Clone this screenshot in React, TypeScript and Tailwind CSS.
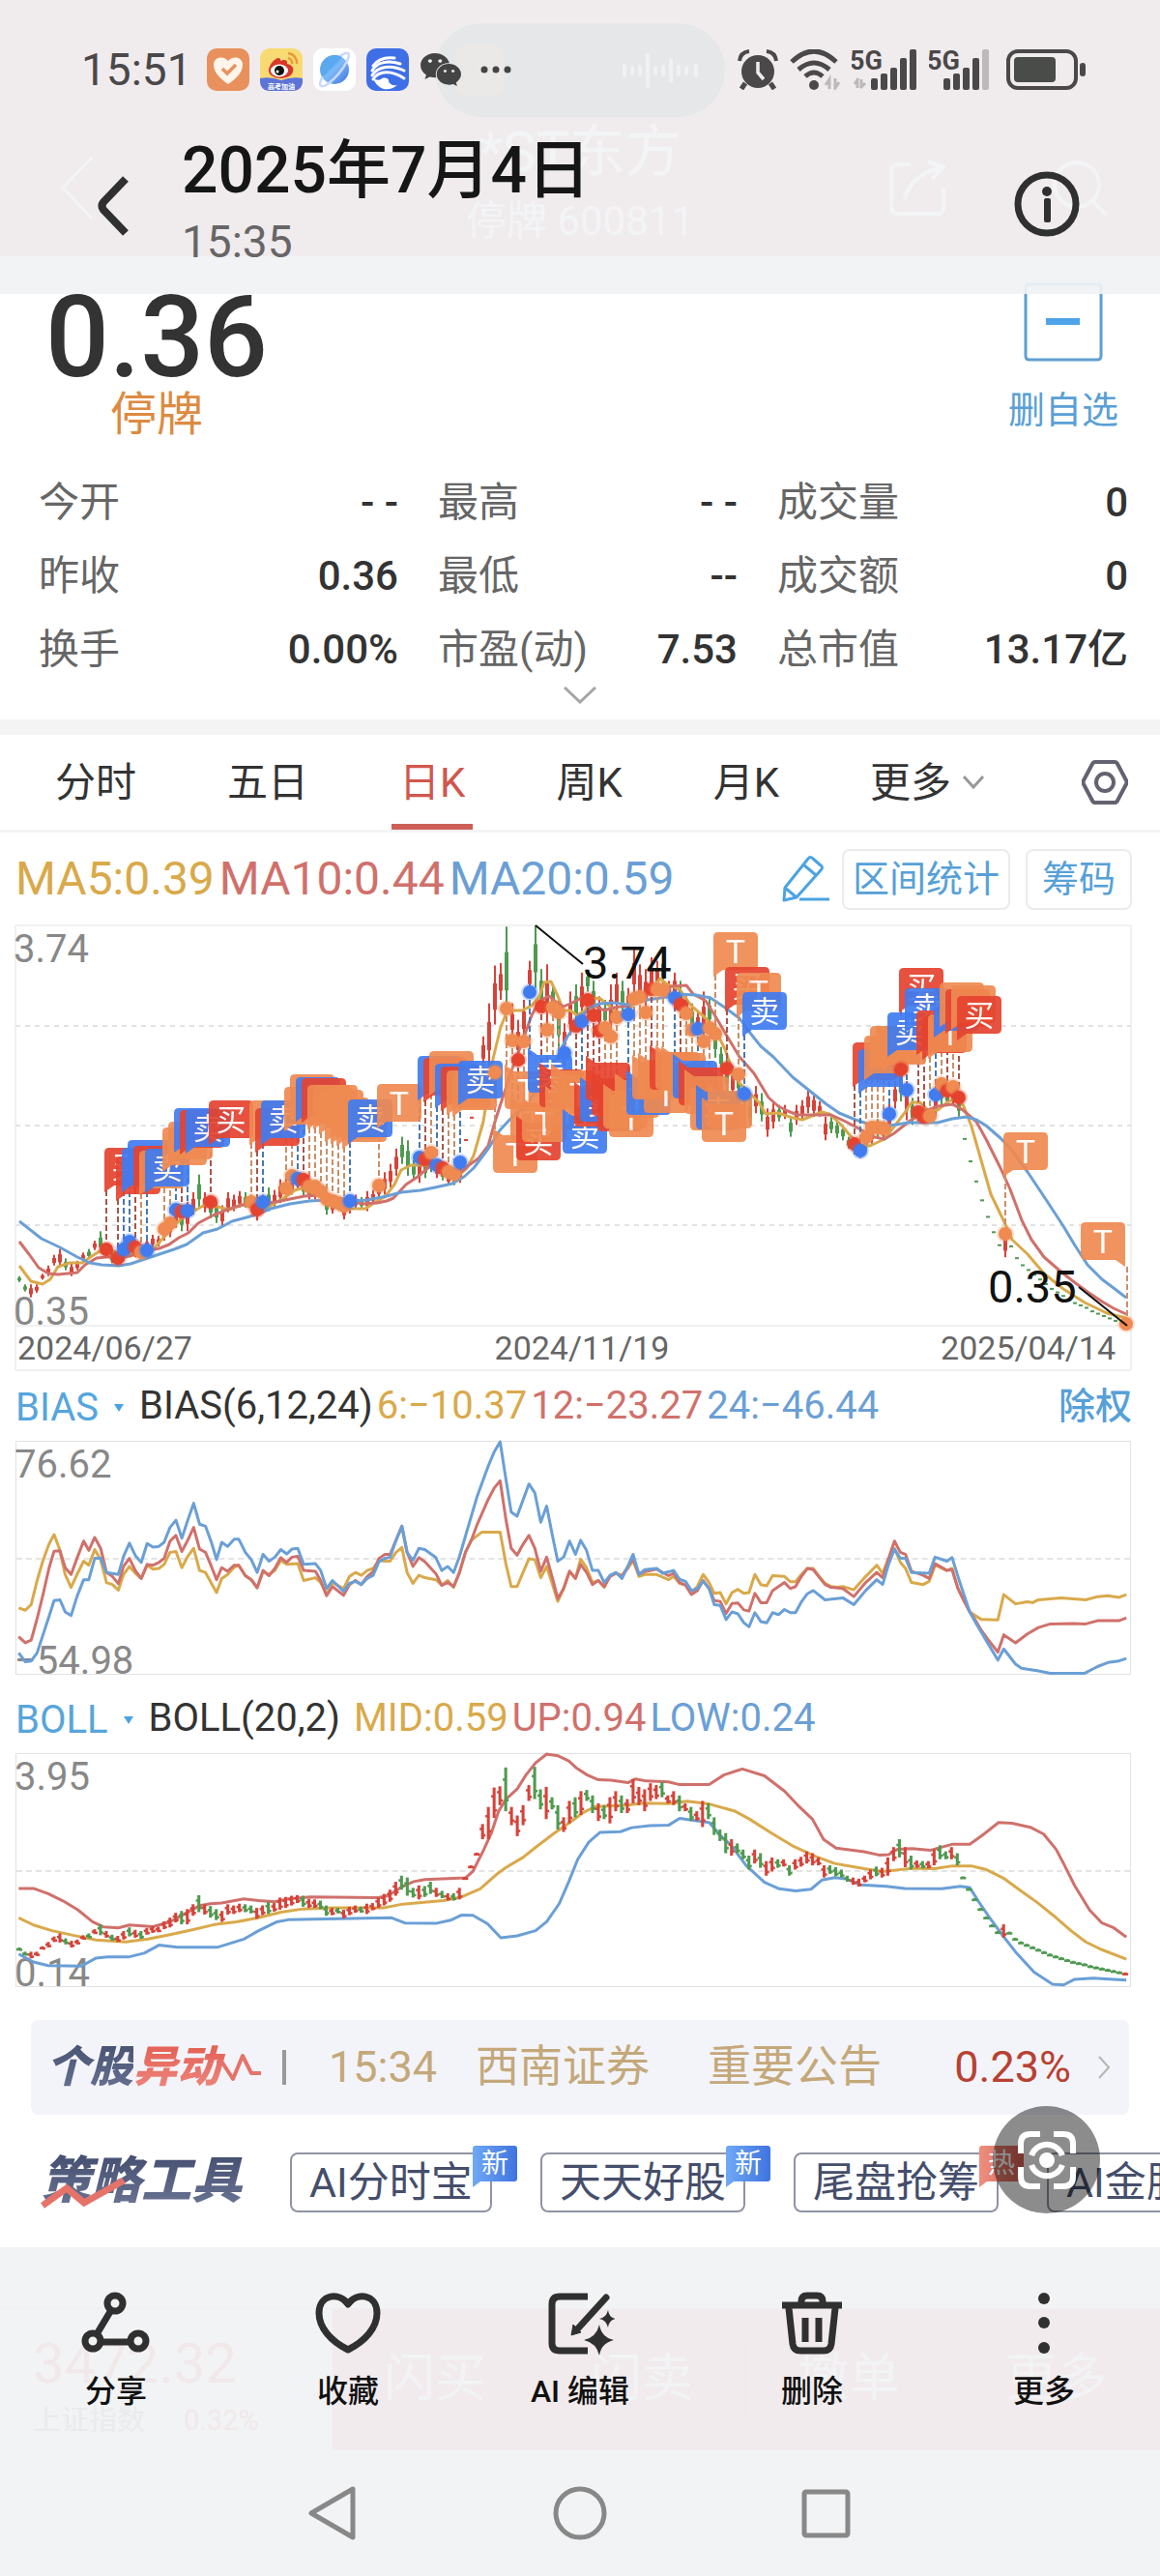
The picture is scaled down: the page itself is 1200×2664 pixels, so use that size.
import type { ReactNode } from "react";
import { FaWeixin } from "react-icons/fa";

const YELLOW = "#d9a94a";
const RED = "#d0706b";
const BLUE = "#6a9fd6";
const UP = "#d6433a";
const DOWN = "#4f9a50";

/* ---------- quote data ---------- */

const stats = [
  { label: "今开", value: "- -" },
  { label: "最高", value: "- -" },
  { label: "成交量", value: "0" },
  { label: "昨收", value: "0.36" },
  { label: "最低", value: "--" },
  { label: "成交额", value: "0" },
  { label: "换手", value: "0.00%" },
  { label: "市盈(动)", value: "7.53" },
  { label: "总市值", value: "13.17亿" },
];

const tabs = ["分时", "五日", "日K", "周K", "月K"];

// high, low, 1 = up / 0 = down
const candles: [number, number, number][] = [
  [0.77, 0.72, 0], [0.7, 0.64, 0], [0.7, 0.59, 1], [0.7, 0.63, 1], [0.79, 0.74, 1], [0.86, 0.77, 1],
  [0.95, 0.86, 1], [1.0, 0.85, 1], [0.92, 0.82, 0], [0.88, 0.77, 1], [0.9, 0.82, 1], [0.97, 0.9, 1],
  [1.0, 0.92, 0], [1.07, 0.99, 1], [1.15, 0.97, 0], [1.04, 0.93, 1], [0.98, 0.88, 0], [0.96, 0.86, 1],
  [1.04, 0.9, 1], [1.1, 0.95, 0], [1.06, 0.93, 1], [1.04, 0.91, 0], [1.09, 0.98, 1], [1.12, 1.01, 1],
  [1.11, 1.02, 1], [1.2, 1.07, 1], [1.26, 1.1, 1], [1.34, 1.18, 1], [1.37, 1.15, 0], [1.4, 1.15, 1],
  [1.48, 1.29, 1], [1.63, 1.35, 0], [1.48, 1.31, 1], [1.45, 1.26, 0], [1.4, 1.22, 0], [1.37, 1.19, 1],
  [1.48, 1.31, 1], [1.46, 1.32, 1], [1.49, 1.35, 1], [1.48, 1.35, 0], [1.46, 1.33, 0], [1.42, 1.24, 1],
  [1.46, 1.3, 1], [1.52, 1.32, 0], [1.5, 1.36, 1], [1.59, 1.39, 1], [1.6, 1.42, 1], [1.62, 1.46, 1],
  [1.63, 1.5, 1], [1.62, 1.44, 0], [1.57, 1.42, 1], [1.56, 1.42, 1], [1.54, 1.4, 0], [1.46, 1.29, 0],
  [1.42, 1.3, 1], [1.42, 1.33, 0], [1.39, 1.25, 1], [1.44, 1.3, 1], [1.46, 1.34, 1], [1.44, 1.34, 0],
  [1.49, 1.32, 1], [1.5, 1.38, 1], [1.59, 1.42, 1], [1.65, 1.46, 1], [1.72, 1.52, 1], [1.85, 1.62, 1],
  [1.95, 1.72, 0], [1.92, 1.62, 0], [1.75, 1.59, 0], [1.79, 1.56, 1], [1.78, 1.6, 0], [1.85, 1.65, 0],
  [1.75, 1.6, 1], [1.7, 1.58, 0], [1.66, 1.54, 1], [1.66, 1.54, 0], [1.75, 1.56, 1], [1.93, 1.92, 1],
  [2.12, 2.11, 1], [2.33, 2.32, 1], [2.8, 2.55, 1], [3.08, 2.55, 1], [3.4, 2.9, 1], [3.42, 3.11, 1],
  [3.73, 3.01, 0], [3.08, 2.78, 1], [2.94, 2.6, 1], [3.11, 2.78, 1], [3.44, 3.18, 1], [3.74, 3.21, 0],
  [3.37, 3.04, 0], [3.41, 2.88, 1], [3.24, 3.04, 0], [3.11, 2.71, 0], [2.91, 2.67, 1], [3.18, 2.81, 1],
  [3.24, 2.91, 0], [3.34, 2.95, 1], [3.36, 3.18, 0], [3.27, 2.98, 0], [3.14, 2.85, 1], [3.11, 2.88, 0],
  [3.24, 2.81, 1], [3.34, 3.01, 1], [3.27, 2.98, 0], [3.21, 2.98, 1], [3.54, 3.14, 1], [3.41, 3.11, 1],
  [3.37, 3.01, 1], [3.47, 3.18, 1], [3.44, 3.21, 1], [3.49, 3.24, 0], [3.27, 3.14, 1], [3.34, 3.11, 1],
  [3.27, 3.01, 0], [3.14, 3.01, 1], [3.08, 2.85, 0], [3.01, 2.85, 1], [3.18, 2.75, 1], [3.14, 2.88, 0],
  [2.91, 2.62, 0], [2.71, 2.52, 0], [2.65, 2.32, 0], [2.55, 2.28, 1], [2.48, 2.32, 0], [2.38, 2.22, 0],
  [2.28, 2.05, 0], [2.38, 2.15, 1], [2.32, 2.08, 0], [2.19, 1.95, 1], [2.25, 2.02, 1], [2.22, 2.08, 0],
  [2.22, 2.1, 1], [2.12, 1.95, 0], [2.22, 2.05, 1], [2.26, 2.1, 1], [2.35, 2.15, 1], [2.32, 2.12, 1],
  [2.25, 2.12, 1], [2.12, 1.92, 1], [2.12, 1.98, 0], [2.09, 1.94, 0], [2.05, 1.92, 0], [1.95, 1.85, 0],
  [1.92, 1.8, 1], [1.9, 1.77, 1], [1.95, 1.84, 1], [2.05, 1.89, 1], [2.1, 1.94, 0], [2.08, 1.92, 1],
  [2.25, 1.95, 1], [2.42, 2.19, 1], [2.55, 2.25, 0], [2.42, 2.09, 1], [2.28, 2.05, 0], [2.2, 2.08, 1],
  [2.19, 2.07, 0], [2.19, 2.07, 1], [2.38, 2.12, 1], [2.45, 2.22, 0], [2.35, 2.22, 0], [2.42, 2.22, 1],
  [2.32, 2.12, 0], [1.94, 1.93, 0], [1.75, 1.74, 0], [1.58, 1.57, 0], [1.42, 1.41, 0], [1.28, 1.27, 0],
  [1.15, 1.14, 0], [1.04, 1.03, 0], [1.15, 0.93, 1], [1.03, 1.02, 0], [0.93, 0.92, 0], [0.87, 0.86, 0],
  [0.83, 0.82, 0], [0.79, 0.78, 0], [0.75, 0.74, 0], [0.71, 0.7, 0], [0.67, 0.66, 0], [0.64, 0.63, 0],
  [0.61, 0.6, 0], [0.58, 0.57, 0], [0.55, 0.54, 0], [0.53, 0.52, 0], [0.51, 0.5, 0], [0.48, 0.47, 0],
  [0.46, 0.45, 0], [0.44, 0.43, 0], [0.42, 0.41, 0], [0.4, 0.39, 0], [0.38, 0.37, 0], [0.36, 0.35, 1],
];

const ma5 =
  "20,1309 32,1325 44,1328 52,1323 60,1310 72,1306 85,1306 95,1299 103,1294 115,1293 125,1297 135,1299 147,1294 160,1290 170,1279 178,1270 187,1261 195,1254 203,1251 212,1246 225,1248 237,1251 250,1246 262,1248 272,1252 280,1247 295,1238 305,1231 315,1228 325,1235 340,1240 352,1246 362,1250 378,1250 390,1242 398,1238 408,1225 415,1210 425,1205 437,1205 445,1206 455,1212 465,1216 475,1215 483,1208 490,1195 500,1160 510,1095 518,1062 525,1045 540,1045 550,1040 558,1030 563,1016 570,1015 577,1030 583,1045 590,1045 597,1050 605,1045 612,1033 620,1032 630,1040 640,1048 650,1045 662,1030 675,1022 683,1012 690,1018 703,1023 715,1040 730,1053 740,1065 750,1085 757,1105 765,1120 775,1130 785,1140 792,1152 805,1151 820,1156 830,1158 840,1154 850,1150 858,1152 870,1163 880,1175 890,1184 900,1185 915,1178 925,1165 935,1152 943,1140 952,1140 960,1148 970,1148 980,1140 990,1135 997,1144 1005,1165 1015,1200 1025,1235 1040,1266 1047,1282 1063,1297 1080,1317 1100,1333 1122,1347 1145,1358 1165,1363";
const ma10 =
  "20,1284 30,1297 40,1311 50,1317 60,1318 80,1316 88,1308 100,1301 110,1300 130,1300 150,1294 165,1291 175,1287 185,1280 195,1275 205,1265 220,1257 235,1251 250,1246 270,1245 285,1243 300,1240 315,1237 330,1236 345,1238 360,1241 375,1245 390,1244 400,1242 407,1239 420,1225 432,1217 445,1206 455,1206 465,1210 477,1212 485,1205 495,1198 505,1185 512,1160 520,1135 530,1105 540,1078 550,1050 558,1035 568,1030 575,1036 583,1041 592,1037 605,1030 615,1040 625,1045 635,1042 650,1040 665,1030 680,1024 695,1020 710,1019 717,1028 730,1035 740,1051 750,1068 765,1093 780,1110 795,1135 805,1144 815,1149 825,1153 845,1153 860,1153 875,1160 890,1168 905,1176 915,1178 925,1172 940,1160 955,1150 970,1144 985,1142 995,1147 1010,1160 1020,1178 1035,1208 1045,1230 1057,1262 1067,1282 1080,1300 1095,1313 1110,1325 1125,1336 1140,1346 1152,1353 1165,1359";
const ma20 =
  "20,1263 43,1281 62,1290 80,1300 93,1306 105,1308 123,1309 135,1307 150,1302 165,1297 180,1292 193,1287 210,1275 225,1271 240,1263 255,1259 265,1256 280,1250 300,1245 320,1242 340,1241 360,1242 380,1241 400,1237 415,1233 435,1231 450,1228 468,1224 480,1217 490,1208 505,1188 517,1169 530,1155 545,1142 560,1120 575,1096 587,1072 600,1053 610,1042 620,1038 635,1037 650,1039 670,1034 690,1031 700,1028 720,1029 735,1032 750,1042 765,1053 775,1067 787,1082 800,1093 820,1114 840,1130 855,1142 868,1151 885,1158 900,1163 920,1164 940,1161 970,1161 985,1157 1000,1155 1010,1158 1020,1164 1035,1177 1047,1190 1063,1212 1083,1242 1100,1268 1112,1288 1125,1308 1140,1323 1152,1332 1165,1342";

type Kind = "B" | "S" | "T";
type Signal = [Kind, number, number];

const flagStyle: Record<Kind, { color: string; text: string }> = {
  B: { color: "#e6432f", text: "买" },
  S: { color: "#407cf0", text: "卖" },
  T: { color: "#ef8a51", text: "T" },
};

// flags that stand above their candle
const upperFlags: Signal[] = [
  ["B", 108, 1187], ["B", 120, 1196], ["S", 126, 1187], ["S", 132, 1179], ["B", 138, 1185], ["T", 144, 1190],
  ["S", 150, 1188], ["T", 168, 1166], ["T", 174, 1160], ["S", 180, 1146], ["B", 186, 1148], ["S", 192, 1147],
  ["B", 216, 1138], ["T", 258, 1138], ["B", 264, 1146], ["S", 270, 1138], ["T", 294, 1124], ["T", 300, 1111],
  ["S", 306, 1114], ["B", 312, 1115], ["T", 318, 1122], ["T", 324, 1122], ["T", 330, 1127], ["T", 336, 1135],
  ["T", 342, 1137], ["T", 348, 1139], ["T", 354, 1142], ["S", 360, 1137], ["T", 390, 1121], ["S", 432, 1092],
  ["B", 438, 1094], ["T", 444, 1087], ["S", 450, 1100], ["B", 456, 1103], ["T", 462, 1107], ["T", 468, 1109],
  ["S", 474, 1097], ["T", 738, 964], ["B", 750, 1000], ["T", 762, 1006], ["S", 768, 1026], ["B", 882, 1078],
  ["S", 888, 1085], ["T", 894, 1071], ["T", 900, 1061], ["T", 906, 1061], ["T", 912, 1062], ["S", 918, 1047],
  ["B", 930, 1001], ["S", 936, 1022], ["B", 948, 1045], ["B", 954, 1050], ["T", 960, 1049], ["S", 966, 1027],
  ["T", 972, 1016], ["B", 978, 1023], ["T", 984, 1019], ["B", 990, 1030], ["T", 1038, 1171],
];

// flags that hang below their candle
const lowerFlags: Signal[] = [
  ["T", 510, 1174], ["T", 522, 1108], ["S", 546, 1091], ["T", 528, 1141], ["B", 534, 1161], ["T", 540, 1142],
  ["B", 558, 1106], ["T", 564, 1130], ["T", 570, 1107], ["T", 576, 1112], ["S", 582, 1154], ["B", 594, 1126],
  ["S", 600, 1121], ["B", 606, 1099], ["B", 612, 1115], ["B", 618, 1131], ["T", 624, 1128], ["T", 630, 1137],
  ["T", 636, 1117], ["S", 648, 1114], ["T", 654, 1098], ["T", 660, 1096], ["T", 666, 1112], ["B", 672, 1088],
  ["T", 678, 1088], ["T", 684, 1089], ["S", 696, 1097], ["B", 702, 1104], ["T", 708, 1113], ["T", 714, 1130],
  ["S", 720, 1129], ["T", 732, 1128], ["T", 726, 1142],
];

// a flag right under the next one would show no readable label
const isBuried = (flags: Signal[], i: number) => {
  const next = flags[i + 1];
  return next !== undefined && Math.abs(next[1] - flags[i][1]) <= 6 && Math.abs(next[2] - flags[i][2]) < 19;
};

const bias6 =
  "25,578 34,584 42,570 50,510 58,460 66,420 73,396 80,430 88,495 96,527 104,495 113,462 120,472 128,433 136,458 144,515 152,520 160,534 167,495 175,475 183,492 191,505 199,472 207,482 215,480 222,470 230,440 238,438 246,478 254,450 262,430 270,485 278,490 293,540 300,505 308,495 317,477 323,472 332,498 340,508 348,528 356,488 364,495 372,485 380,460 388,470 403,468 411,510 427,503 434,515 442,545 450,515 465,530 473,500 481,490 489,497 497,485 505,480 513,460 521,462 528,462 536,440 544,428 551,490 559,517 567,497 575,503 590,508 598,522 606,510 614,527 622,490 630,440 638,410 652,390 677,390 685,470 692,525 700,525 708,490 716,456 724,458 732,503 740,475 748,520 755,562 763,530 771,487 779,505 786,457 794,478 802,515 810,510 818,527 826,497 834,492 842,497 850,480 857,460 865,500 873,495 889,495 905,508 912,500 920,517 928,520 936,540 944,525 952,495 960,515 967,542 975,540 983,568 991,540 999,532 1007,542 1014,540 1022,495 1030,520 1038,523 1046,498 1062,500 1070,513 1077,513 1085,495 1093,480 1101,480 1109,500 1117,517 1125,525 1133,527 1141,525 1156,533 1172,500 1187,472 1195,492 1203,455 1211,430 1219,465 1226,480 1234,515 1250,520 1258,512 1266,472 1282,485 1289,480 1297,530 1305,560 1313,588 1321,598 1329,607 1351,608 1359,545 1375,568 1391,563 1398,565 1406,558 1437,553 1470,558 1486,550 1500,548 1515,552 1525,545";
const bias12 =
  "25,650 34,665 42,658 50,605 58,545 66,480 73,437 81,436 88,478 96,495 104,455 113,412 120,435 128,403 136,430 144,490 152,500 160,518 167,475 175,455 183,485 191,505 199,470 207,472 215,465 222,455 230,412 238,398 246,438 254,410 262,378 270,432 278,440 286,475 293,508 300,478 308,487 317,472 323,472 332,498 340,508 348,528 356,485 364,498 372,480 380,453 388,465 395,452 403,450 411,485 427,487 434,510 442,548 450,525 465,547 473,520 481,510 489,520 497,500 505,488 513,455 521,445 528,445 536,410 544,375 551,440 559,475 567,453 575,463 590,493 598,522 606,515 614,525 622,490 630,440 638,410 646,370 661,308 669,280 677,262 685,360 692,430 700,447 708,420 716,398 724,430 732,487 740,452 748,505 755,555 763,530 771,487 779,505 786,470 794,490 802,520 810,510 818,525 826,500 834,492 842,500 850,475 857,455 865,495 873,488 889,482 905,498 912,492 920,515 928,522 936,545 944,535 952,510 960,530 967,560 975,562 983,592 991,567 999,566 1007,583 1014,586 1022,542 1030,565 1038,565 1046,535 1062,515 1070,530 1077,525 1085,500 1093,480 1101,483 1117,520 1125,527 1141,530 1156,550 1172,515 1187,490 1195,503 1203,455 1211,412 1219,440 1226,445 1234,487 1250,497 1258,505 1266,468 1282,485 1289,483 1297,530 1305,560 1313,588 1321,610 1329,635 1337,655 1351,688 1359,645 1375,665 1391,643 1406,627 1422,618 1453,617 1470,618 1486,610 1515,610 1525,603";
const bias24 =
  "25,690 34,712 42,710 50,690 58,645 66,600 73,560 81,558 88,588 96,597 104,550 113,508 120,508 128,455 136,455 144,490 160,495 167,450 175,417 183,448 191,465 199,418 207,427 215,425 222,415 230,378 238,360 246,405 254,360 262,318 270,370 278,375 286,415 293,458 300,415 308,425 317,407 323,407 332,440 340,458 348,490 356,445 364,462 372,452 380,433 388,444 395,432 403,430 411,470 427,468 434,485 442,530 450,510 465,537 473,517 481,512 489,520 497,505 505,497 513,463 521,455 528,452 536,410 544,375 551,440 559,460 567,430 575,433 590,453 598,485 606,475 614,490 622,450 630,400 638,350 646,300 661,225 669,190 677,165 685,260 692,340 700,350 708,310 716,270 724,292 732,365 740,325 748,400 755,462 763,452 771,412 779,445 786,410 794,435 802,485 810,485 818,515 826,497 834,490 842,505 850,475 857,445 865,495 873,483 889,480 897,492 912,485 920,507 928,512 936,535 944,530 952,512 960,530 967,570 975,572 983,607 991,588 999,593 1007,615 1014,625 1022,590 1030,612 1038,615 1046,590 1054,595 1062,582 1070,590 1077,590 1085,563 1093,543 1101,535 1117,558 1141,553 1156,570 1172,535 1187,508 1195,520 1203,470 1211,432 1219,455 1226,455 1234,490 1258,492 1266,452 1282,462 1289,453 1297,500 1305,545 1313,588 1321,615 1329,640 1351,708 1359,680 1375,718 1383,728 1406,735 1422,741 1468,741 1486,724 1500,714 1515,710 1525,704";

const bollUp =
  "25,1267 45,1267 65,1280 85,1298 105,1320 125,1350 140,1363 160,1365 175,1358 207,1362 230,1350 250,1330 270,1310 285,1305 300,1303 330,1293 350,1297 372,1300 390,1293 420,1288 512,1290 525,1285 545,1262 560,1250 575,1245 630,1241 640,1225 655,1170 665,1130 675,1075 685,1045 700,1020 712,985 725,955 740,933 755,937 770,950 780,967 795,985 810,997 827,998 850,1004 860,995 875,1000 905,1002 920,1009 960,1009 980,985 1005,970 1035,987 1062,1025 1080,1060 1100,1095 1115,1145 1132,1167 1170,1176 1190,1184 1203,1183 1215,1170 1235,1168 1260,1172 1290,1157 1313,1157 1330,1135 1352,1103 1370,1105 1395,1115 1413,1132 1430,1170 1440,1205 1455,1260 1475,1320 1492,1353 1508,1365 1525,1388";
const bollMid =
  "25,1340 45,1358 70,1372 100,1384 130,1395 170,1400 200,1393 230,1382 260,1370 290,1357 320,1350 350,1340 380,1326 410,1318 450,1315 520,1315 545,1306 600,1297 625,1288 650,1268 675,1228 685,1215 708,1190 725,1165 750,1130 770,1105 790,1078 805,1064 850,1060 870,1055 905,1056 930,1050 960,1057 995,1075 1015,1095 1045,1130 1075,1163 1105,1188 1130,1205 1170,1218 1195,1225 1235,1217 1265,1218 1290,1211 1315,1211 1335,1220 1360,1243 1380,1270 1405,1303 1430,1340 1450,1372 1470,1400 1490,1418 1525,1443";
const bollLow =
  "25,1430 45,1450 65,1459 110,1460 130,1440 145,1437 175,1437 195,1428 215,1408 240,1413 295,1413 330,1393 350,1372 375,1350 390,1345 440,1343 530,1340 548,1353 590,1354 610,1346 625,1333 640,1334 660,1355 678,1390 700,1385 725,1372 740,1350 757,1305 770,1250 782,1195 797,1152 812,1128 840,1126 855,1116 880,1111 905,1110 920,1093 960,1103 975,1135 990,1160 1010,1210 1035,1252 1055,1268 1077,1273 1098,1269 1113,1246 1130,1240 1145,1243 1165,1258 1200,1262 1225,1267 1275,1268 1300,1262 1313,1265 1325,1300 1340,1340 1358,1385 1375,1425 1400,1475 1425,1505 1440,1507 1455,1493 1480,1490 1525,1495";

/* ---------- status bar ---------- */

const SignalBars = ({ weak = false }: { weak?: boolean }) => (
  <svg viewBox="0 0 68 42" className="h-[42px] w-[68px]" aria-hidden="true">
    <text x="-2" y="21" fontSize="27" fontWeight="700" fill="#4a4849" fontFamily="Roboto">
      5G
    </text>
    {!weak && <path d="M6 31v9M10 31v9M3 36l4-6M9 40l5-5" stroke="#bdb9bb" strokeWidth="3" />}
    {[12, 17, 23, 33, 42].map((h, i) => (
      <rect
        key={h}
        x={(weak ? 15 : 20) + i * 10}
        y={42 - h}
        width="7"
        height={h}
        rx="2"
        fill={weak && i === 4 ? "#bdb9bb" : "#4a4849"}
      />
    ))}
  </svg>
);

const AppIcons = () => (
  <>
    <svg viewBox="0 0 44 44" className="size-11" aria-hidden="true">
      <rect width="44" height="44" rx="10" fill="#e8915c" />
      <path d="M22 37C12 30 7 24 7 17c0-8 10-10 15-4 5-6 15-4 15 4 0 7-5 13-15 20z" fill="#fff5ea" />
      <path d="M16 21l5 5 9-9" fill="none" stroke="#e8915c" strokeWidth="3.500" />
    </svg>
    <svg viewBox="0 0 44 44" className="size-11" aria-hidden="true">
      <rect width="44" height="44" rx="10" fill="#f8da72" />
      <path d="M0 31q11-2 22 2 11-4 22-2v3c0 6-4 10-10 10H10C4 44 0 40 0 34z" fill="#5c74d8" />
      <path d="M9 22c1-7 7-12 10-12 3 0 2 3 2 3 4-2 8-1 7 3 5 1 7 4 6 8-1 5-8 7-13 7s-13-3-12-9z" fill="#d9372c" />
      <ellipse cx="20" cy="23" rx="9" ry="6.500" fill="#fff" />
      <circle cx="20" cy="23" r="5" fill="#111" />
      <circle cx="18" cy="24" r="1.500" fill="#fff" />
      <path d="M29 5a10 10 0 0 1 9 11M29 10a5 5 0 0 1 4 6" fill="none" stroke="#e79a3a" strokeWidth="2.500" />
      <text x="22" y="42" textAnchor="middle" fontSize="7" fontWeight="700" fill="#fff" fontFamily="Noto Sans CJK SC">
        高考加油
      </text>
    </svg>
    <svg viewBox="0 0 44 44" className="size-11" aria-hidden="true">
      <defs>
        <linearGradient id="planet" x1="0" y1="0" x2="1" y2="1">
          <stop offset="0" stopColor="#4aa0ee" />
          <stop offset=".5" stopColor="#7db8f8" />
          <stop offset="1" stopColor="#3b6fe0" />
        </linearGradient>
      </defs>
      <rect width="44" height="44" rx="10" fill="#fff" />
      <circle cx="22" cy="22" r="15" fill="url(#planet)" />
      <ellipse cx="22" cy="22" rx="22" ry="6" fill="none" stroke="#c9d9fb" strokeWidth="2.500" transform="rotate(-50 22 22)" />
      <path d="M14 10a15 15 0 0 0-4 20L30 9a15 15 0 0 0-16 1z" fill="#5aa9f0" />
    </svg>
    <svg viewBox="0 0 44 44" className="size-11" aria-hidden="true">
      <rect width="44" height="44" rx="10" fill="#3f6fe6" />
      <g fill="none" stroke="#fff" strokeWidth="3" strokeLinecap="round">
        <path d="M7 18C12 11 20 9 29 10" />
        <path d="M6 23c5-9 17-11 29-7" />
        <path d="M6 28c6-10 20-11 33-5" />
        <path d="M7 32c6-10 20-9 32-1" />
      </g>
      <path d="M7 31c5 13 17 14 25 7-5 1-8-1-9-4 1-3-5-5-8-2-2 1-5 1-8-1z" fill="#fff" />
    </svg>
    <FaWeixin className="size-11 text-[#444]" />
  </>
);

const StatusBar = () => (
  <div className="relative flex h-11 items-center justify-between pl-[84px] pr-[77px]">
    <div className="flex items-center gap-[11px]">
      <span className="mr-1 text-[46px] leading-[44px] text-[#4a4849]">15:51</span>
      <AppIcons />
      <svg viewBox="0 0 32 8" className="ml-2 h-2 w-8" fill="#444" aria-hidden="true">
        <circle cx="4" cy="4" r="3.500" />
        <circle cx="16" cy="4" r="3.500" />
        <circle cx="28" cy="4" r="3.500" />
      </svg>
    </div>
    <div className="flex items-center gap-[12px]">
      <svg viewBox="0 0 42 42" className="size-[42px]" aria-hidden="true">
        <circle cx="21" cy="23" r="17" fill="#4a4849" />
        <path d="M8 35l-4 6M34 35l4 6" stroke="#4a4849" strokeWidth="5" />
        <path d="M2 12Q3 3 12 2M30 2q9 1 10 10" fill="none" stroke="#4a4849" strokeWidth="4" />
        <path d="M21 13v11l6 7" fill="none" stroke="#f0ecee" strokeWidth="3.500" />
      </svg>
      <svg viewBox="0 0 52 42" className="h-[42px] w-[52px]" aria-hidden="true">
        <g fill="none" stroke="#4a4849" strokeWidth="5">
          <path d="M2 13q23-22 46 0" />
          <path d="M9 21q16-14 32 0" />
          <path d="M16 28q9-8 18 0" />
        </g>
        <circle cx="25" cy="37" r="5" fill="#4a4849" />
        <path d="M41 41V31l-4 6M47 30v10l4-6" fill="none" stroke="#bdb9bb" strokeWidth="3" />
      </svg>
      <SignalBars />
      <SignalBars weak />
      <svg viewBox="0 0 82 42" className="h-[42px] w-[82px]" aria-hidden="true">
        <rect x="2" y="2" width="70" height="38" rx="10" fill="none" stroke="#4a4849" strokeWidth="4" />
        <rect x="8" y="8" width="43" height="26" rx="4" fill="#4a4c4a" />
        <rect x="76" y="14" width="6" height="14" rx="3" fill="#4a4849" />
      </svg>
    </div>
  </div>
);

/* ---------- header ---------- */

// the app's own title bar showing faintly through the viewer's header
const HeaderGhost = () => (
  <div className="absolute inset-x-0 top-0 h-[265px] overflow-hidden bg-[#f0ecee] text-[#f3f4f6]" aria-hidden="true">
    <div className="mx-auto mt-6 flex h-[97px] w-[300px] items-center justify-between rounded-full bg-[#e5e7e8] pl-5 pr-7">
      <div className="size-[52px] rounded-xl bg-[#ebe8e8]" />
      <svg viewBox="0 0 78 36" className="h-9 w-[78px]" stroke="#f0f1f2" strokeWidth="4" strokeLinecap="round">
        <path d="M2 13v10M10 15v6M18 14v8M26 2v32M34 15v6M42 14v8M50 7v22M58 14v8M66 15v6M76 13v10" />
      </svg>
    </div>
    <div className="flex flex-col items-center">
      <p className="text-[58px] leading-[72px]">*ST东方</p>
      <p className="text-[42px] leading-[72px]">停牌 600811</p>
    </div>
    <svg viewBox="0 0 34 66" className="absolute left-[63px] top-[162px] h-[66px] w-[34px]" fill="none" stroke="currentColor" strokeWidth="3">
      <path d="M32 1L2 32l30 32" />
    </svg>
    <svg viewBox="0 0 58 58" className="absolute right-[222px] top-[165px] size-[58px]" fill="none" stroke="currentColor" strokeWidth="4">
      <path d="M22 5H9q-7 0-7 7v37q0 7 7 7h40q7 0 7-7V30M16 42Q20 17 54 8M40 2l16 6-12 12" />
    </svg>
    <svg viewBox="0 0 58 58" className="absolute right-[54px] top-[166px] size-[58px]" fill="none" stroke="currentColor" strokeWidth="4">
      <circle cx="26" cy="25" r="23" />
      <path d="M42 42l14 14" />
    </svg>
  </div>
);

const Header = () => (
  <header className="relative bg-[#f2f3f5] pb-[29px] pt-[50px]">
    <HeaderGhost />
    <StatusBar />
    <div className="relative mt-[43px] flex items-center justify-between pl-[98px] pr-[83px]">
      <div className="flex items-center gap-[54px]">
        <button type="button" aria-label="返回" className="mt-[14px]">
          <svg viewBox="0 0 36 64" className="h-16 w-9" fill="none" stroke="#303030" strokeWidth="8" strokeLinejoin="round">
            <path d="M32 4L9 28q-3 4 0 8l23 24" />
          </svg>
        </button>
        <div>
          <h1 className="text-[66px] font-medium leading-[80px] text-[#161616]">2025年7月4日</h1>
          <p className="mt-[8px] text-[46px] leading-[50px] text-[#666]">15:35</p>
        </div>
      </div>
      <button type="button" aria-label="详情" className="mt-[10px]">
        <svg viewBox="0 0 68 68" className="size-[68px]" aria-hidden="true">
          <circle cx="34" cy="34" r="30" fill="none" stroke="#303030" strokeWidth="7" />
          <circle cx="34" cy="21" r="5" fill="#303030" />
          <rect x="31" y="28" width="7" height="25" rx="2" fill="#303030" />
        </svg>
      </button>
    </div>
  </header>
);

/* ---------- quote ---------- */

const Quote = () => (
  <section>
    <div className="flex items-start justify-between pb-7 pl-[46px] pr-[43px]">
      <div className="w-[232px] text-center">
        <p className="text-[116px] font-medium leading-[90px] text-[#333]">0.36</p>
        <p className="mt-[10px] text-5xl leading-[50px] text-[#dd8a40]">停牌</p>
      </div>
      <button type="button" className="relative -mt-3 flex flex-col items-center text-[38px] leading-[46px] text-[#5a9fd6]">
        <svg viewBox="0 0 82 82" className="size-[82px]" aria-hidden="true">
          <path d="M2 12V6q0-4 4-4h70q4 0 4 4v6" fill="none" stroke="#e5edf4" strokeWidth="3" />
          <path d="M2 12v64q0 4 4 4h70q4 0 4-4V12" fill="none" stroke="#5f9fd2" strokeWidth="3" />
          <rect x="23" y="37" width="35" height="7" fill="#4fa3e8" />
        </svg>
        <span className="mt-[27px]">删自选</span>
      </button>
    </div>
    <dl className="grid grid-cols-[372fr_310fr_363fr] gap-x-[41px] pl-10 pr-[33px] text-[42px] leading-[76px]">
      {stats.map((item) => (
        <div key={item.label} className="flex justify-between whitespace-nowrap">
          <dt className="text-[#666]">{item.label}</dt>
          <dd className="font-medium text-[#333]">{item.value}</dd>
        </div>
      ))}
    </dl>
    <button type="button" aria-label="展开" className="flex h-[34px] w-full justify-center">
      <svg viewBox="0 0 34 18" className="h-[18px] w-[34px]" fill="none" stroke="#a5a5a5" strokeWidth="3">
        <path d="M1 1l16 15L33 1" />
      </svg>
    </button>
  </section>
);

const PeriodTabs = () => (
  <nav className="flex h-[101px] items-center gap-[94px] border-b-[3px] border-[#f4f4f4] pl-[57px] pr-[33px] text-[42px]">
    {tabs.map((tab) => (
      <button
        key={tab}
        type="button"
        className={tab === "日K" ? "relative h-full text-[#d1564d]" : "h-full text-[#333]"}
      >
        {tab}
        {tab === "日K" && <span className="absolute -inset-x-2 bottom-0 h-[6px] bg-[#cd5f58]" />}
      </button>
    ))}
    <button type="button" className="flex items-center gap-3 text-[#333]">
      更多
      <svg viewBox="0 0 22 14" className="h-[14px] w-[22px]" fill="none" stroke="#999" strokeWidth="3">
        <path d="M1 1l10 11L21 1" />
      </svg>
    </button>
    <button type="button" aria-label="设置" className="ml-auto">
      <svg viewBox="0 0 48 46" className="h-[46px] w-12" fill="none" stroke="#626270" strokeWidth="4">
        <path d="M14 2h20q2 0 3 2l9 17q1 2 0 4l-9 17q-1 2-3 2H14q-2 0-3-2L2 25q-1-2 0-4l9-17q1-2 3-2z" />
        <circle cx="24" cy="23" r="9" />
      </svg>
    </button>
  </nav>
);

const MaRow = () => (
  <div className="flex h-24 items-center justify-between pl-4 pr-[29px]">
    <div className="flex gap-[5px] text-[48px]">
      <span className="text-[#d9a94a]">MA5:0.39</span>
      <span className="text-[#d0706b]">MA10:0.44</span>
      <span className="text-[#6a9fd6]">MA20:0.59</span>
    </div>
    <div className="flex items-center text-[38px] text-[#56a0d8]">
      <button type="button" aria-label="画线" className="mr-3">
        <svg viewBox="0 0 50 50" className="size-[50px]" fill="none" stroke="#4ba3e3" strokeWidth="3" strokeLinejoin="round">
          <path d="M3 34L27 4q2-3 5 0l8 7q3 2 0 5L15 44 2 47zM22 10l13 11M3 34l12 10" />
          <path d="M18 46h31" />
        </svg>
      </button>
      <button type="button" className="mr-4 h-[63px] rounded-lg border-2 border-[#ebebeb] px-[9px]">
        区间统计
      </button>
      <button type="button" className="h-[63px] rounded-lg border-2 border-[#ebebeb] px-[15px]">
        筹码
      </button>
    </div>
  </div>
);

/* ---------- K line ---------- */

const priceToY = (p: number) => 957 + ((3.74 - p) / 3.39) * 414;

const TAIL_DOWN = "M5 0H41q5 0 5 5V34q0 5-5 5H10L0 46V5q0-5 5-5z";
const TAIL_UP = "M0-7L10 0H41q5 0 5 5V34q0 5-5 5H5q-5 0-5-5z";
const TAIL_RIGHT = "M5 0H41q5 0 5 5V46L36 39H5q-5 0-5-5V5q0-5 5-5z";

type FlagProps = { kind: Kind; x: number; y: number; tail: string; labelled?: boolean };

const Flag = ({ kind, x, y, tail, labelled = true }: FlagProps) => (
  <g transform={`translate(${x} ${y})`} opacity=".92">
    <path d={tail} fill={flagStyle[kind].color} />
    {labelled && (
      <text
        x="23"
        y={kind === "T" ? 32 : 31}
        textAnchor="middle"
        fontSize={kind === "T" ? 34 : 31}
        fill="#fff"
      >
        {flagStyle[kind].text}
      </text>
    )}
  </g>
);

const Stem = ({ kind, x, from, to }: { kind: Kind; x: number; from: number; to: number }) => (
  <path
    d={`M${x} ${from}V${to}`}
    stroke={kind === "T" ? "#c98f68" : kind === "B" ? "#a8544c" : "#4a78b0"}
    strokeWidth="2"
    strokeDasharray="6 3"
  />
);

const Dot = ({ kind, x, y }: { kind: Kind; x: number; y: number }) => (
  <g fill={flagStyle[kind].color}>
    <circle cx={x} cy={y} r="9" opacity=".3" />
    <circle cx={x} cy={y} r="7" />
  </g>
);

const KLineChart = () => (
  <svg viewBox="16 957 1154 461" className="block h-auto w-full overflow-visible" role="img" aria-label="日K线图">
    <g fill="none" stroke="#e2e2e2">
      <path d="M16 957H1170V1417H16zM16 1371H1170" strokeWidth="1" />
      <path d="M16 1061H1170M16 1164H1170M16 1267H1170" strokeWidth="2" strokeDasharray="5 5" />
    </g>
    <g fill="#888" fontSize="40">
      <text x="14" y="995">3.74</text>
      <text x="14" y="1370">0.35</text>
    </g>
    <g fill="#666" fontSize="34">
      <text x="18" y="1406">2024/06/27</text>
      <text x="602" y="1406" textAnchor="middle">2024/11/19</text>
      <text x="1154" y="1406" textAnchor="end">2025/04/14</text>
    </g>

    {candles.map(([high, low, up], i) => {
      const x = 20 + i * 6;
      const top = priceToY(high);
      const height = Math.max(priceToY(low) - top, 2);
      const flat = high - low < 0.02;
      return (
        <g key={i} fill={up ? UP : DOWN}>
          <rect x={flat ? x - 2 : x - 1} y={top} width={flat ? 4 : 2} height={height} />
          {!flat && <rect x={x - 2} y={top + height * 0.3} width="4" height={height * 0.45} />}
        </g>
      );
    })}

    <g fill="none" strokeWidth="3" strokeLinejoin="round">
      <polyline points={ma5} stroke={YELLOW} />
      <polyline points={ma10} stroke={RED} />
      <polyline points={ma20} stroke={BLUE} />
    </g>

    {upperFlags.map(([kind, x, y]) => (
      <Stem key={x} kind={kind} x={x + 2} from={y + 44} to={y + 97} />
    ))}
    {lowerFlags.map(([kind, x, y]) => (
      <Stem key={x} kind={kind} x={x + 2} from={y - 57} to={y} />
    ))}
    {upperFlags.map(([kind, x, y], i) => (
      <Flag key={x} kind={kind} x={x} y={y} tail={TAIL_DOWN} labelled={!isBuried(upperFlags, i)} />
    ))}
    {lowerFlags.map(([kind, x, y], i) => (
      <Flag key={x} kind={kind} x={x} y={y} tail={TAIL_UP} labelled={!isBuried(lowerFlags, i)} />
    ))}
    {upperFlags.map(([kind, x, y]) => (
      <Dot key={x} kind={kind} x={x + 2} y={y + 105} />
    ))}
    {lowerFlags.map(([kind, x, y]) => (
      <Dot key={x} kind={kind} x={x + 2} y={y - 65} />
    ))}
    <Stem kind="T" x={1166} from={1310} to={1362} />
    <Flag kind="T" x={1118} y={1264} tail={TAIL_RIGHT} />
    <Dot kind="T" x={1165} y={1369} />

    <path d="M554 957l49 40M1116 1331l50 40" stroke="#111" strokeWidth="2" />
    <g fill="#111" fontSize="47">
      <text x="603" y="1012">3.74</text>
      <text x="1022" y="1347">0.35</text>
    </g>
  </svg>
);

/* ---------- indicators ---------- */

type IndicatorProps = {
  name: string;
  params: string;
  values: [string, string, string];
  action?: string;
  high: string;
  low: string;
  viewBox: string;
  children: ReactNode;
};

const Indicator = ({ name, params, values, action, high, low, viewBox, children }: IndicatorProps) => (
  <section>
    <div className="flex h-[72px] items-center justify-between pl-4 pr-[29px] text-[40px]">
      <div className="flex items-center gap-1">
        <button type="button" className="mr-3 flex items-center gap-4 pt-1 text-[#56a5dc]">
          {name}
          <svg viewBox="0 0 10 8" className="h-2 w-[10px]" fill="#4ba3e3" aria-hidden="true">
            <path d="M0 0h10L5 8z" />
          </svg>
        </button>
        <span className="whitespace-pre text-[#333]">{params}</span>
        <span className="text-[#d9a94a]">{values[0]}</span>
        <span className="text-[#d0706b]">{values[1]}</span>
        <span className="text-[#6a9fd6]">{values[2]}</span>
      </div>
      {action && (
        <button type="button" className="text-[38px] font-medium text-[#56a0d8]">
          {action}
        </button>
      )}
    </div>
    <div className="relative ml-4 mr-[30px] h-[242px] border border-[#e2e2e2]">
      <span className="absolute -left-[2px] top-[4px] text-[40px] leading-10 text-[#888]">{high}</span>
      <span className="absolute -left-[2px] -bottom-[7px] text-[40px] leading-10 text-[#888]">{low}</span>
      <div className="absolute inset-x-0 top-1/2 border-t-2 border-dashed border-[#e4e4e4]" />
      <svg
        viewBox={viewBox}
        preserveAspectRatio="none"
        className="absolute inset-0 size-full overflow-visible"
        role="img"
        aria-label={name}
      >
        {children}
      </svg>
    </div>
  </section>
);

const Line = ({ points, color }: { points: string; color: string }) => (
  <polyline
    points={points}
    fill="none"
    stroke={color}
    strokeWidth="3"
    strokeLinejoin="round"
    vectorEffect="non-scaling-stroke"
  />
);

const BollCandles = () => (
  <>
    {candles.map(([high, low, up], i) => {
      const x = 26 + i * 7.84;
      const top = 933 + ((3.95 - high) / 3.81) * 576;
      const height = Math.max(((high - low) / 3.81) * 576, 6);
      return (
        <g key={i} fill={up ? UP : DOWN}>
          <rect x={x - 2} y={top} width="4" height={height} />
          <rect x={x - 4} y={top + height * 0.25} width="4" height="6" />
          <rect x={x} y={top + height * 0.75 - 3} width="4" height="6" />
        </g>
      );
    })}
  </>
);

/* ---------- news + tools ---------- */

const NewsBar = () => (
  <a
    href="#news"
    className="mx-8 mt-[34px] flex h-[98px] items-center rounded-lg bg-[#f3f4f9] pl-4 pr-5 text-[45px] text-[#c4a87a]"
  >
    <span className="flex items-center text-[45px] font-black italic">
      <span className="bg-linear-to-b from-[#434d6e] to-[#6d7796] bg-clip-text text-transparent">个股</span>
      <span className="bg-linear-to-b from-[#e25549] to-[#ee8f86] bg-clip-text pr-2 text-transparent">异动</span>
      <svg viewBox="0 0 48 30" className="-ml-3 h-[30px] w-12" fill="none" stroke="#e5736a" strokeWidth="4" strokeLinejoin="round">
        <path d="M0 10h6l11 17L27 3l9 18h10" />
      </svg>
    </span>
    <span className="ml-5 h-9 w-1 bg-[#999]" />
    <span className="ml-11">15:34</span>
    <span className="ml-10">西南证券</span>
    <span className="ml-[60px]">重要公告</span>
    <span className="ml-auto text-[#b84133]">0.23%</span>
    <svg viewBox="0 0 12 24" className="ml-7 h-6 w-3" fill="none" stroke="#b5b5b5" strokeWidth="2">
      <path d="M1 1l10 11L1 23" />
    </svg>
  </a>
);

const Badge = ({ text, hot = false }: { text: string; hot?: boolean }) => (
  <span className="absolute -top-[9px] left-[calc(100%-18px)] h-[43px] w-[46px] text-center text-[28px] leading-[37px] text-white">
    <svg viewBox="0 0 46 43" className="absolute inset-0 size-full" aria-hidden="true">
      <defs>
        <linearGradient id={hot ? "hot" : "new"}>
          <stop offset="0" stopColor={hot ? "#ec8f80" : "#6fa9f5"} />
          <stop offset="1" stopColor={hot ? "#dc6053" : "#3f74df"} />
        </linearGradient>
      </defs>
      <path d="M3 0H43q3 0 3 3V34q0 3-3 3H8L0 43V3q0-3 3-3z" fill={hot ? "url(#hot)" : "url(#new)"} />
    </svg>
    <span className="relative">{text}</span>
  </span>
);

const Tool = ({ name, badge, hot }: { name: string; badge?: string; hot?: boolean }) => (
  <button
    type="button"
    className="relative h-[62px] min-w-[209px] shrink-0 whitespace-nowrap rounded-lg border-2 border-[#8f93a3] px-[18px] text-left text-[43px] leading-[56px] text-[#454e6b]"
  >
    {name}
    {badge && <Badge text={badge} hot={hot} />}
  </button>
);

const ToolRow = () => (
  <section className="relative flex h-[137px] items-center pl-[42px]">
    <h2 className="relative w-[258px] shrink-0 text-[52px] font-black italic">
      <span className="bg-linear-to-b from-[#434d6e] to-[#6d7796] bg-clip-text pr-2 text-transparent">策略工具</span>
      <svg viewBox="0 0 90 34" className="absolute left-0 top-[34px] h-[34px] w-[90px]" fill="none" stroke="#e5736a" strokeWidth="7">
        <path d="M2 30L27 12l18 15L86 4" />
      </svg>
    </h2>
    <div className="flex min-w-0 flex-1 items-center gap-[50px] pt-[3px]">
      <Tool name="AI分时宝" badge="新" />
      <Tool name="天天好股" badge="新" />
      <Tool name="尾盘抢筹" badge="热" hot />
      <Tool name="AI金股" />
    </div>
    <button
      type="button"
      aria-label="识图"
      className="absolute right-[62px] -top-[9px] flex size-[111px] items-center justify-center rounded-full bg-black/45"
    >
      <svg viewBox="0 0 60 60" className="size-[60px]" fill="none" stroke="#fff" strokeWidth="6">
        <path d="M3 23V13q0-10 10-10h10M37 3h10q10 0 10 10v10M57 37v10q0 10-10 10H37M23 57H13Q3 57 3 47V37" />
        <path d="M14 25a17 17 0 0 1 32 0M14 35a17 17 0 0 0 32 0" />
        <circle cx="30" cy="30" r="8" fill="#fff" stroke="none" />
      </svg>
    </button>
  </section>
);

/* ---------- bottom ---------- */

const actions = [
  {
    label: "分享",
    icon: (
      <>
        <circle cx="35" cy="15" r="8" />
        <circle cx="12" cy="54" r="8" />
        <circle cx="59" cy="54" r="8" />
        <path d="M31 22L16 47M20 55h31" />
      </>
    ),
  },
  {
    label: "收藏",
    icon: <path d="M36 63C18 54 6 40 6 25 6 5 28 3 36 16 44 3 66 5 66 25c0 15-12 29-30 38z" strokeLinejoin="round" />,
  },
  {
    label: "AI 编辑",
    icon: (
      <>
        <path d="M44 8H15Q7 8 7 16v40q0 8 8 8h29" />
        <path d="M63 9L33 42" strokeLinecap="round" />
        <path d="M27 48l2-11 8 8z" fill="#303030" strokeWidth="1" />
        <path d="M56 37q2 13 15 16-13 3-15 16-3-13-16-16 13-3 16-16zM65 22q1 8 8 9-7 1-8 9-2-8-9-9 7-1 9-9z" fill="#303030" stroke="none" />
      </>
    ),
  },
  {
    label: "删除",
    icon: (
      <>
        <path d="M5 17h62M25 17v-4q0-6 6-6h10q6 0 6 6v4M12 20l4 37q1 7 8 7h24q7 0 8-7l4-37" />
        <path d="M29 30v25M43 30v25" />
      </>
    ),
  },
  {
    label: "更多",
    icon: (
      <g fill="#303030" stroke="none">
        <circle cx="36" cy="10" r="6" />
        <circle cx="36" cy="35" r="6" />
        <circle cx="36" cy="61" r="6" />
      </g>
    ),
  },
];

const TradeGhost = () => (
  <div className="absolute inset-x-0 top-[63px] flex h-[147px] border-t border-[#eeeff1]" aria-hidden="true">
    <div className="w-[344px] shrink-0 pl-[34px] pt-[26px] text-[#f1e8ea]">
      <p className="text-[58px] leading-[60px]">3472.32</p>
      <p className="mt-2 flex gap-10 text-[29px]">
        <span className="text-[#e9ebed]">上证指数</span>
        <span>0.32%</span>
      </p>
    </div>
    <div className="grid flex-1 grid-cols-4 items-center divide-x-2 divide-[#efeaec] bg-[#f1ebed] text-center text-[53px] text-[#f2f3f5]">
      <span>闪买</span>
      <span>闪卖</span>
      <span>撤单</span>
      <span>更多</span>
    </div>
  </div>
);

const BottomBar = () => (
  <footer className="relative bg-[#f2f3f5] pb-[35px] pt-[43px]">
    <TradeGhost />
    <div className="relative grid grid-cols-5">
      {actions.map((action) => (
        <button key={action.label} type="button" className="flex flex-col items-center text-[32px] leading-10 text-[#111]">
          <svg viewBox="0 0 72 72" className="size-[72px]" fill="none" stroke="#303030" strokeWidth="7" aria-hidden="true">
            {action.icon}
          </svg>
          <span className="mt-[14px] font-medium">{action.label}</span>
        </button>
      ))}
    </div>
    <div className="relative mt-[76px] flex h-[60px] items-center justify-center gap-[198px]">
      <button type="button" aria-label="后退">
        <svg viewBox="0 0 56 56" className="size-14" fill="none" stroke="#888" strokeWidth="5" strokeLinejoin="round">
          <path d="M47 3v50L4 28z" />
        </svg>
      </button>
      <button type="button" aria-label="主屏幕">
        <svg viewBox="0 0 56 56" className="size-14" fill="none" stroke="#888" strokeWidth="5">
          <circle cx="28" cy="28" r="25" />
        </svg>
      </button>
      <button type="button" aria-label="最近任务">
        <svg viewBox="0 0 56 56" className="size-14" fill="none" stroke="#888" strokeWidth="5" strokeLinejoin="round">
          <rect x="6" y="6" width="45" height="45" rx="2" />
        </svg>
      </button>
    </div>
  </footer>
);

export default function App() {
  return (
    <div className="overflow-x-hidden bg-white font-[Roboto,'Noto_Sans_CJK_SC',sans-serif]">
      <Header />
      <main>
        <Quote />
        <div className="h-4 bg-[#f4f4f4]" />
        <PeriodTabs />
        <MaRow />
        <div className="pl-4 pr-[30px]">
          <KLineChart />
        </div>
        <Indicator
          name="BIAS"
          params="BIAS(6,12,24)"
          values={["6:−10.37", "12:−23.27", "24:−46.44"]}
          action="除权"
          high="76.62"
          low="−54.98"
          viewBox="22 165 1508 577"
        >
          <Line points={bias6} color={YELLOW} />
          <Line points={bias12} color={RED} />
          <Line points={bias24} color={BLUE} />
        </Indicator>
        <div className="pt-[9px]">
          <Indicator
            name="BOLL"
            params="BOLL(20,2) "
            values={["MID:0.59", "UP:0.94", "LOW:0.24"]}
            high="3.95"
            low="0.14"
            viewBox="22 933 1508 577"
          >
            <Line points={bollLow} color={BLUE} />
            <Line points={bollMid} color={YELLOW} />
            <Line points={bollUp} color={RED} />
            <BollCandles />
          </Indicator>
        </div>
        <NewsBar />
        <ToolRow />
      </main>
      <BottomBar />
    </div>
  );
}
